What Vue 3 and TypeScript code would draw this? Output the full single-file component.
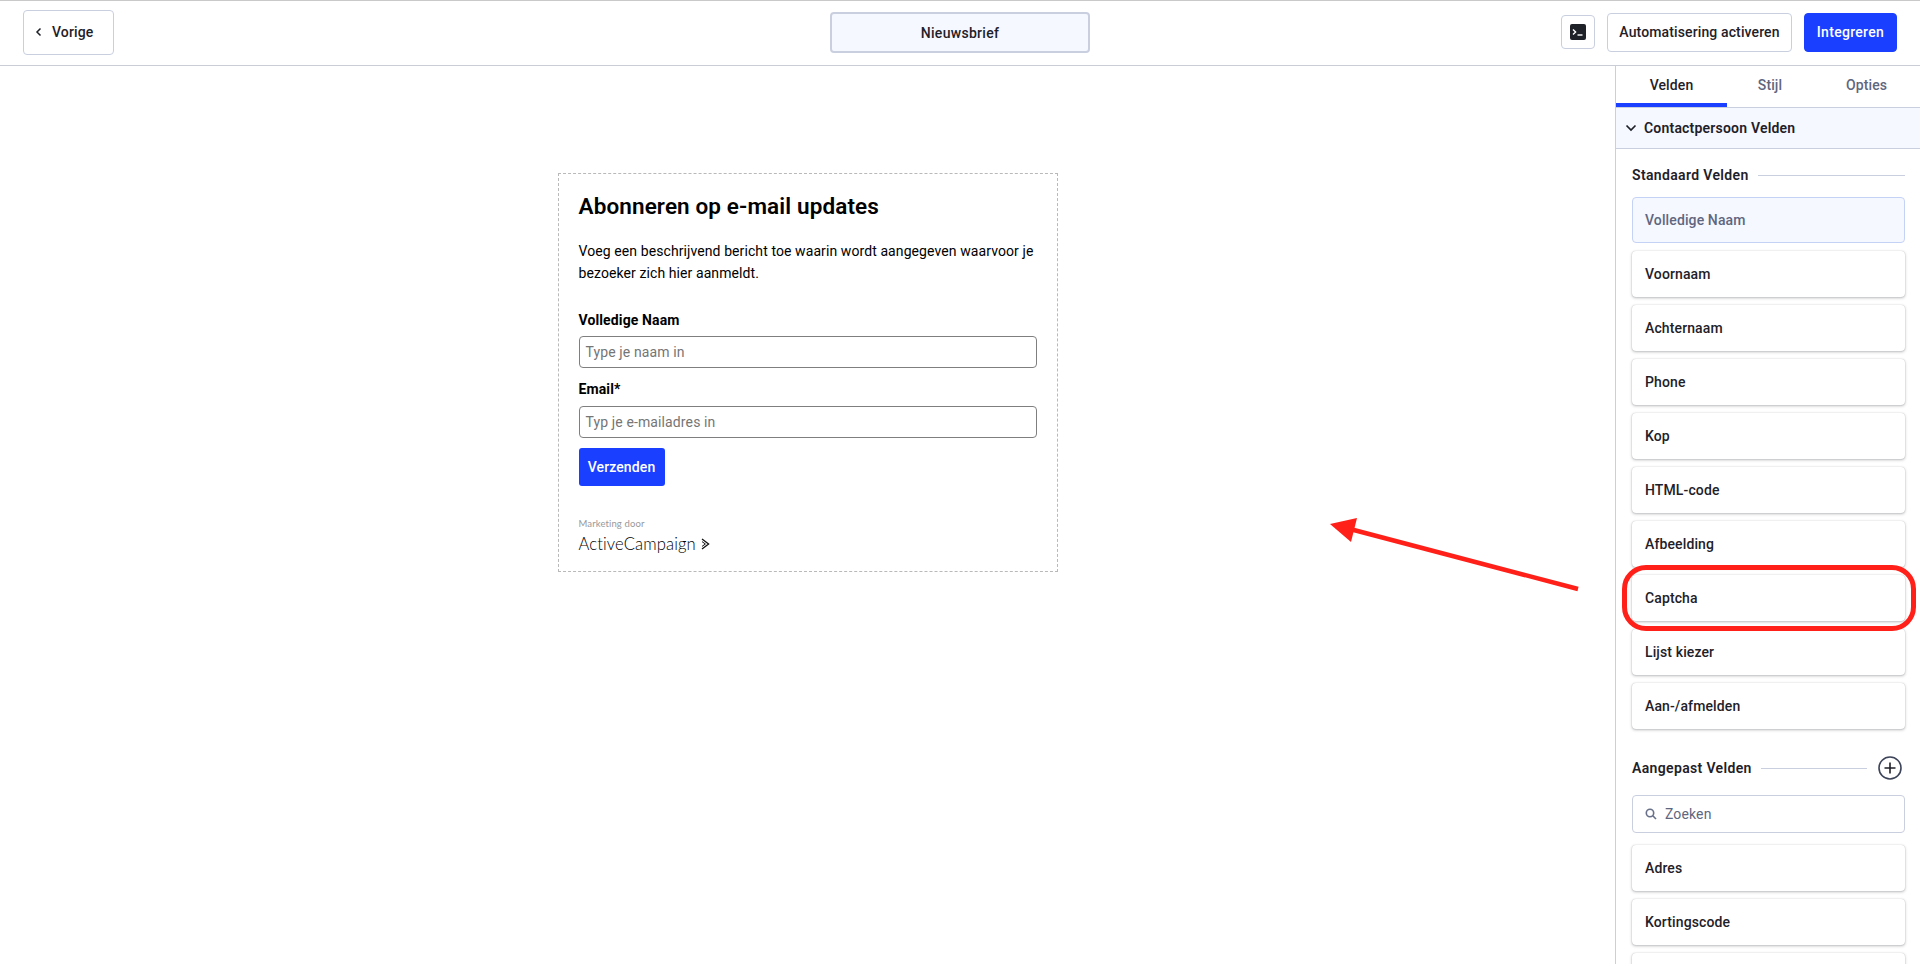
<script setup lang="ts">
const standard: string[] = ['Voornaam', 'Achternaam', 'Phone', 'Kop', 'HTML-code', 'Afbeelding', 'Captcha', 'Lijst kiezer', 'Aan-/afmelden']
const custom: string[] = ['Adres', 'Kortingscode', '']
</script>

<template>
  <div class="page">
    <header class="topbar">
      <div class="top-left">
        <button class="btn back">
          <svg width="8" height="10" viewBox="0 0 8 10"><path d="M5.5 1.5 2 5l3.5 3.5" fill="none" stroke="#1f2129" stroke-width="1.5" /></svg>
          <span>Vorige</span>
        </button>
      </div>
      <div class="form-name">Nieuwsbrief</div>
      <div class="top-right">
        <button class="btn term">
          <svg width="16" height="16" viewBox="0 0 16 16">
            <rect width="16" height="16" rx="2" fill="#1f2129" />
            <path d="M3 5.5 5.6 8 3 10.5" fill="none" stroke="#fff" stroke-width="1.4" />
            <path d="M7.5 11h5" stroke="#fff" stroke-width="1.4" />
          </svg>
        </button>
        <button class="btn auto">Automatisering activeren</button>
        <button class="btn primary">Integreren</button>
      </div>
    </header>

    <div class="body">
      <main class="canvas">
        <section class="card">
          <h1>Abonneren op e-mail updates</h1>
          <p class="desc">Voeg een beschrijvend bericht toe waarin wordt aangegeven waarvoor je bezoeker zich hier aanmeldt.</p>
          <label class="lbl first">Volledige Naam</label>
          <div class="input first-input">Type je naam in</div>
          <label class="lbl second">Email*</label>
          <div class="input">Typ je e-mailadres in</div>
          <button class="submit">Verzenden</button>
          <div class="brand-small">Marketing door</div>
          <div class="brand">
            <span>ActiveCampaign</span>
            <svg width="9" height="12" viewBox="0 0 9 12"><path d="M1 1l6.6 5L1 11" fill="none" stroke="#111" stroke-width="1.3" /><path d="M1 3.6 4.4 6 1 8.4" fill="none" stroke="#111" stroke-width="1" /></svg>
          </div>
        </section>
      </main>

      <aside class="side">
        <nav class="tabs">
          <div class="tab active">Velden</div>
          <div class="tab">Stijl</div>
          <div class="tab">Opties</div>
        </nav>
        <div class="acc">
          <svg width="12" height="8" viewBox="0 0 12 8"><path d="M1.5 1.5 6 6l4.5-4.5" fill="none" stroke="#1f2129" stroke-width="1.7" /></svg>
          <span>Contactpersoon Velden</span>
        </div>
        <div class="fields">
          <div class="sec-head"><span>Standaard Velden</span><i></i></div>
          <div class="item disabled">Volledige Naam</div>
          <div v-for="f in standard" :key="f" class="item">{{ f }}</div>
          <div class="sec-head custom">
            <span>Aangepast Velden</span><i></i>
            <svg width="24" height="24" viewBox="0 0 24 24"><circle cx="12" cy="12" r="11" fill="none" stroke="#3d4459" stroke-width="1.6" /><path d="M12 6.5v11M6.5 12h11" stroke="#1f2129" stroke-width="1.6" /></svg>
          </div>
          <div class="search">
            <svg width="12" height="12" viewBox="0 0 12 12"><circle cx="5" cy="5" r="3.7" fill="none" stroke="#68708a" stroke-width="1.6" /><path d="m7.8 7.8 3.2 3.2" stroke="#68708a" stroke-width="1.6" /></svg>
            <span>Zoeken</span>
          </div>
          <div v-for="f in custom" :key="f" class="item">{{ f }}</div>
        </div>
      </aside>
    </div>

    <div class="mark-ring"></div>
    <svg class="mark-arrow" width="270" height="90" viewBox="0 0 270 90">
      <path d="M268 72 40 12" stroke="#ff2019" stroke-width="4.5" fill="none" />
      <path d="M20 7 47 1 41 25Z" fill="#ff2019" />
    </svg>
  </div>
</template>

<style>
html, body { margin: 0; background: #fff; overflow: hidden; }
</style>

<style scoped>
.page {
  position: relative;
  width: 1920px;
  height: 964px;
  overflow: hidden;
  background: #fff;
  color: #1f2129;
  font-family: Roboto, "Liberation Sans", sans-serif;
  font-size: 14px;
  letter-spacing: .12px;
}
button { font-family: inherit; cursor: pointer; letter-spacing: inherit; }
.topbar {
  box-sizing: border-box;
  height: 66px;
  border-top: 1px solid #c9c9c9;
  border-bottom: 1px solid #cbcdd6;
  display: grid;
  grid-template-columns: 1fr 260px 1fr;
  align-items: center;
  padding: 0 23px 1px;
}
.top-left { display: flex; }
.btn {
  background: #fff;
  border: 1px solid #c9cfdf;
  border-radius: 4px;
  color: #1f2129;
  font-size: 14px;
  font-weight: 500;
  padding: 0;
}
.back {
  width: 91px;
  height: 45px;
  display: flex;
  align-items: center;
  gap: 9px;
  padding-left: 11px;
  margin-top: -1px;
}
.form-name {
  height: 41px;
  box-sizing: border-box;
  background: #f5f8ff;
  border: 2px solid #c9cfdf;
  border-radius: 4px;
  display: flex;
  align-items: center;
  justify-content: center;
  font-weight: 500;
  letter-spacing: .3px;
}
.top-right { display: flex; justify-content: flex-end; align-items: center; gap: 12px; margin-top: -1px; }
.term { width: 34px; height: 34px; display: flex; align-items: center; justify-content: center; }
.auto { width: 185px; height: 39px; }
.primary { width: 93px; height: 39px; background: #1a3fff; border-color: #1a3fff; color: #fff; letter-spacing: .3px; }
.body { display: flex; height: 898px; }
.canvas { flex: 1; display: flex; justify-content: center; align-items: flex-start; padding-top: 107px; }
.card {
  width: 500px;
  height: 399px;
  box-sizing: border-box;
  border: 1px dashed #b9b9b9;
  padding: 18px 20px 0;
  color: #000;
}
h1 { margin: 0; font-size: 22.5px; line-height: 28px; font-weight: 600; color: #000; letter-spacing: .12px; }
.desc { margin: 20px 0 0; line-height: 22px; font-size: 14px; color: #000; letter-spacing: .09px; }
.lbl { display: block; font-weight: 700; font-size: 14px; line-height: 18px; color: #000; }
.first { margin-top: 27px; }
.second { margin-top: 12px; }
.input {
  height: 32px;
  box-sizing: border-box;
  margin-top: 8px;
  border: 1px solid #7f7f7f;
  border-radius: 4px;
  padding: 0 6px;
  line-height: 30px;
  color: #757575;
  font-size: 14px;
}
.first-input { margin-top: 7px; }
.submit {
  display: block;
  margin-top: 10px;
  width: 86px;
  height: 38px;
  background: #1a3fff;
  border: 0;
  border-radius: 3px;
  color: #fff;
  font-size: 14px;
  font-weight: 500;
}
.brand-small { margin-top: 31px; font-size: 9.5px; line-height: 14px; color: #999; font-family: Lato, sans-serif; }
.brand { display: flex; align-items: center; gap: 5px; margin-top: 3px; font-family: Lato, sans-serif; font-weight: 300; font-size: 16.6px; line-height: 20px; color: #000; }
.side { width: 305px; border-left: 1px solid #c9cfdf; box-sizing: border-box; display: flex; flex-direction: column; }
.tabs { display: flex; height: 42px; box-sizing: border-box; border-bottom: 1px solid #c9cfdf; flex: none; }
.tab { width: 111px; box-sizing: border-box; display: flex; align-items: center; justify-content: center; font-weight: 500; color: #5f667e; height: 41px; padding-bottom: 4px; }
.tab.active { color: #1f2129; border-bottom: 4px solid #1a3fff; padding-bottom: 0; }
.tab:nth-child(2) { width: 86px; }
.tab:nth-child(3) { width: 107px; }
.acc {
  flex: none;
  height: 41px;
  box-sizing: border-box;
  background: #f5f8ff;
  border-bottom: 1px solid #c9cfdf;
  display: flex;
  align-items: center;
  gap: 7px;
  padding-left: 9px;
  font-weight: 600;
  letter-spacing: .2px;
}
.fields { padding: 16px 15px 0 16px; display: flex; flex-direction: column; }
.sec-head { display: flex; align-items: center; gap: 9px; height: 20px; margin-bottom: 12px; font-weight: 600; letter-spacing: .35px; }
.sec-head i { flex: 1; height: 1px; background: #c9cfdf; }
.custom { margin-top: 19px; height: 24px; margin-bottom: 15px; }
.custom svg { margin: 0 3px 0 2px; }
.item {
  flex: none;
  height: 46px;
  box-sizing: border-box;
  margin-bottom: 8px;
  padding-left: 13px;
  display: flex;
  align-items: center;
  background: #fff;
  border-radius: 4px;
  font-weight: 500;
  box-shadow: 0 0 1px rgba(31, 33, 41, .25), 0 1px 3px rgba(31, 33, 41, .3);
}
.item.disabled { background: #f5f8ff; border: 1px solid #c4d2f5; color: #5f667e; box-shadow: none; padding-left: 12px; }
.search {
  flex: none;
  height: 38px;
  box-sizing: border-box;
  border: 1px solid #c9cfdf;
  border-radius: 4px;
  margin-bottom: 12px;
  display: flex;
  align-items: center;
  gap: 8px;
  padding-left: 12px;
  color: #5f667e;
}
.mark-ring {
  position: absolute;
  left: 1622px;
  top: 565px;
  width: 294px;
  height: 66px;
  box-sizing: border-box;
  border: 5px solid #ff2019;
  border-radius: 24px;
}
.mark-arrow { position: absolute; left: 1310px; top: 517px; }
</style>
